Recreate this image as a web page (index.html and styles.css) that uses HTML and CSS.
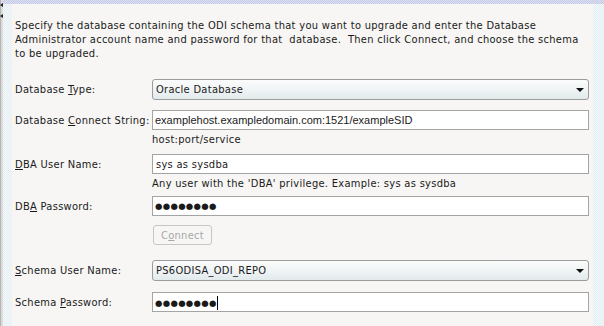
FILE: index.html
```html
<!DOCTYPE html>
<html>
<head>
<meta charset="utf-8">
<link rel="stylesheet" href="styles.css">
</head>
<body>
<div class="frame">
  <div class="edge">
    <span class="mark"></span>
    <span class="mark mark2"></span>
  </div>
  <div class="wrap">
    <div class="topband"></div>
    <div class="body-row">
      <div class="gutter"></div>
      <div class="panel">
        <p class="intro">Specify the database containing the ODI schema that you want to upgrade and enter the Database<br>Administrator account name and password for that&nbsp; database.&nbsp; Then click Connect, and choose the schema<br>to be upgraded.</p>
        <div class="form">
          <div class="row r-type">
            <label class="lbl">Database <u>T</u>ype:</label>
            <div class="combo"><span class="combo-text">Oracle Database</span><span class="arrow"></span></div>
          </div>
          <div class="row r-conn">
            <label class="lbl">Database <u>C</u>onnect String:</label>
            <div class="field">
              <div class="input mono">examplehost.exampledomain.com:1521/exampleSID</div>
              <div class="hint">host:port/service</div>
            </div>
          </div>
          <div class="row r-dba">
            <label class="lbl"><u>D</u>BA User Name:</label>
            <div class="field">
              <div class="input">sys as sysdba</div>
              <div class="hint">Any user with the 'DBA' privilege. Example: sys as sysdba</div>
            </div>
          </div>
          <div class="row r-pwd">
            <label class="lbl">DB<u>A</u> Password:</label>
            <div class="input pwd">●●●●●●●●</div>
          </div>
          <div class="row r-btn">
            <span></span>
            <div><button class="btn" disabled>C<u>o</u>nnect</button></div>
          </div>
          <div class="row r-schema">
            <label class="lbl"><u>S</u>chema User Name:</label>
            <div class="combo"><span class="combo-text">PS6ODISA_ODI_REPO</span><span class="arrow"></span></div>
          </div>
          <div class="row r-spwd">
            <label class="lbl">Schema <u>P</u>assword:</label>
            <div class="input pwd">●●●●●●●●<span class="caret"></span></div>
          </div>
        </div>
      </div>
      <div class="rgutter"></div>
    </div>
  </div>
</div>
</body>
</html>
```
FILE: styles.css
```css
html, body {
  margin: 0;
  padding: 0;
}
body {
  width: 604px;
  height: 326px;
  overflow: hidden;
  background: #f7f6f4;
  font-family: "DejaVu Sans Condensed", "DejaVu Sans", sans-serif;
  font-stretch: condensed;
  font-size: 11px;
  letter-spacing: 0.3px;
  color: #1a1a1a;
}
.frame {
  display: flex;
  height: 326px;
}
.edge {
  position: relative;
  width: 3px;
  background: linear-gradient(to right, #b4b4b4 0 1px, #dcdcdc 1px 3px);
}
.mark {
  position: absolute;
  left: 0;
  top: 3px;
  width: 0;
  height: 0;
  border-top: 2px solid transparent;
  border-bottom: 2px solid transparent;
  border-right: 3px solid #222;
}
.mark2 {
  top: 14px;
}
.wrap {
  flex: 1;
  display: flex;
  flex-direction: column;
}
.topband {
  height: 4px;
  background: repeating-conic-gradient(#c6c6e6 0 25%, #dbe3f2 0 50%) 0 0 / 2px 2px;
}
.body-row {
  flex: 1;
  display: flex;
}
.gutter {
  width: 9px;
  background: repeating-conic-gradient(#e4eef3 0 25%, #f5f8f9 0 50%) 0 0 / 2px 2px;
}
.rgutter {
  width: 11px;
  background: repeating-conic-gradient(#e1eef4 0 25%, #f3f8f9 0 50%) 0 0 / 2px 2px;
}
.panel {
  flex: 1;
  padding: 0 0 0 3px;
}
.intro {
  margin: 15px 0 0 0;
  line-height: 14px;
  white-space: nowrap;
}
.form {
  margin-top: 18px;
  display: flex;
  flex-direction: column;
}
.row {
  display: grid;
  grid-template-columns: 137px 437px;
  align-items: start;
}
.lbl {
  display: block;
  padding-top: 4px;
  line-height: 13px;
  white-space: nowrap;
}
.combo {
  position: relative;
  box-sizing: border-box;
  height: 21px;
  border: 1px solid #9c9c9c;
  border-radius: 3px;
  background: linear-gradient(#fbfbfb, #f0f4f5 50%, #e2eaec);
  padding: 3px 0 0 3px;
  line-height: 14px;
}
.arrow {
  position: absolute;
  right: 4px;
  top: 8px;
  width: 0;
  height: 0;
  border-left: 4px solid transparent;
  border-right: 4px solid transparent;
  border-top: 4px solid #111;
}
.input {
  box-sizing: border-box;
  height: 20px;
  border: 1px solid #a4a4a4;
  background: #fff;
  padding: 3px 0 0 3px;
  line-height: 13px;
  white-space: nowrap;
}
.mono {
  font-family: "Liberation Sans", Arial, sans-serif;
  font-stretch: normal;
  letter-spacing: 0;
  font-size: 11px;
  padding-left: 2px;
}
.pwd {
  font-family: "DejaVu Sans", sans-serif;
  font-stretch: normal;
  font-size: 8.5px;
  letter-spacing: 0.3px;
  line-height: 13px;
  padding-top: 3px;
  padding-left: 2px;
}
.caret {
  display: inline-block;
  width: 1px;
  height: 14px;
  background: #000;
  vertical-align: -4px;
  margin-left: 0;
}
.hint {
  line-height: 13px;
  padding-top: 3px;
}
.r-type { margin-bottom: 10px; }
.r-conn { margin-bottom: 8px; }
.r-dba { margin-bottom: 6px; }
.r-pwd { margin-bottom: 9px; }
.r-btn { margin-bottom: 15px; }
.r-schema { margin-bottom: 11px; }
.btn {
  box-sizing: border-box;
  width: 59px;
  height: 20px;
  margin-left: 1px;
  border: 1px solid #c9c5c1;
  border-radius: 3px;
  background: #f7f6f4;
  color: #a8a8a8;
  font: inherit;
  letter-spacing: inherit;
  padding: 0;
}
```
